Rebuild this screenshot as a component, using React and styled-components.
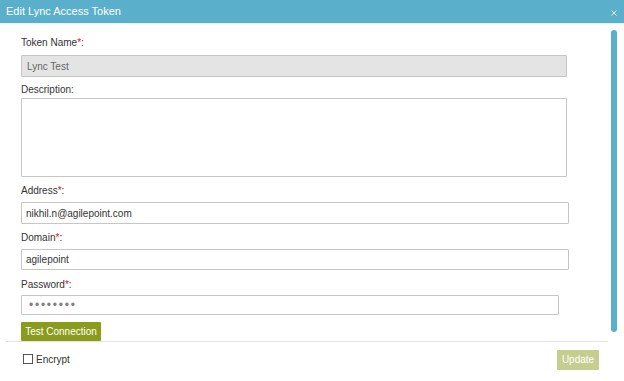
import React from "react";
import styled, { createGlobalStyle } from "styled-components";

const Global = createGlobalStyle`
  html, body { margin: 0; padding: 0; background: #ffffff; }
  body { font-family: "Liberation Sans", Arial, sans-serif; }
  * { box-sizing: border-box; }
`;

const Dialog = styled.div`
  width: 624px;
  height: 381px;
  display: flex;
  flex-direction: column;
  background: #ffffff;
  overflow: hidden;
`;

const Header = styled.div`
  height: 24px;
  flex: none;
  display: flex;
  align-items: center;
  justify-content: space-between;
  background: #5aafca;
  border-bottom: 1px solid #e6f3f7;
  padding: 0 7px 1px 6px;
`;

const Title = styled.span`
  color: #ffffff;
  font-size: 11px;
  line-height: 14px;
`;

const Close = styled.button`
  border: none;
  background: none;
  padding: 0;
  margin-top: 3px;
  width: 6px;
  height: 6px;
  display: flex;
  cursor: pointer;
`;

const Body = styled.div`
  flex: 1;
  display: flex;
  min-height: 0;
  overflow: hidden;
`;

const Form = styled.div`
  flex: 1;
  display: flex;
  flex-direction: column;
  align-items: flex-start;
  padding-left: 21px;
`;

const Label = styled.label`
  display: block;
  font-size: 10px;
  line-height: 12px;
  height: 12px;
  color: #333333;
  margin-top: ${(p) => p.$mt}px;
`;

const Req = styled.span`
  color: #e01010;
`;

const Input = styled.input`
  display: block;
  width: ${(p) => p.$w}px;
  height: ${(p) => p.$h}px;
  margin-top: ${(p) => p.$mt}px;
  padding: 0 0 0 ${(p) => (p.$disabled ? 5 : 4)}px;
  border: 1px solid #c6c6c6;
  border-radius: 1px;
  background: ${(p) => (p.$disabled ? "#e4e4e4" : "#ffffff")};
  color: ${(p) => (p.$disabled ? "#666666" : "#333333")};
  font-family: "Liberation Sans", Arial, sans-serif;
  font-size: 10px;
  outline: none;
`;

const PasswordInput = styled(Input)`
  color: #808080;
  font-size: 12px;
  letter-spacing: 1.75px;
  padding-left: 7px;
`;

const TextArea = styled.textarea`
  display: block;
  width: 546px;
  height: 79px;
  margin-top: 2px;
  border: 1px solid #c6c6c6;
  border-radius: 1px;
  resize: none;
  outline: none;
  font-family: "Liberation Sans", Arial, sans-serif;
  font-size: 10px;
`;

const Button = styled.button`
  border: none;
  border-radius: 1px;
  color: #ffffff;
  font-family: "Liberation Sans", Arial, sans-serif;
  font-size: 10px;
  line-height: 12px;
  padding: 0;
  width: ${(p) => p.$w}px;
  height: ${(p) => p.$h}px;
  background: ${(p) => (p.$muted ? "#c6ce8f" : "#8b9b1c")};
  margin-top: ${(p) => p.$mt || 0}px;
  flex: none;
`;

const Scroll = styled.div`
  width: 6px;
  margin: 6px 7px 9px 0;
  border-radius: 3px;
  background: #5aafca;
  flex: none;
`;

const Footer = styled.div`
  height: 40px;
  flex: none;
  margin: 0 16px 0 6px;
  border-top: 1px solid #e3e3e3;
  display: flex;
  justify-content: space-between;
  align-items: flex-start;
  padding: 0 9px 0 17px;
`;

const Check = styled.label`
  display: flex;
  align-items: center;
  margin-top: 12px;
  font-size: 10px;
  line-height: 12px;
  color: #333333;
`;

const Box = styled.span`
  width: 10px;
  height: 10px;
  border: 1px solid #555555;
  background: #ffffff;
  margin-right: 3px;
  margin-top: -2px;
`;

export default function App() {
  return (
    <>
      <Global />
      <Dialog>
        <Header>
          <Title>Edit Lync Access Token</Title>
          <Close aria-label="Close">
            <svg width="6" height="6" viewBox="0 0 6 6">
              <path d="M0.5 0.5 L5.5 5.5 M5.5 0.5 L0.5 5.5" stroke="#d4eaf2" strokeWidth="1" />
            </svg>
          </Close>
        </Header>
        <Body>
          <Form>
            <Label $mt={13}>
              Token Name<Req>*</Req>:
            </Label>
            <Input $mt={6} $w={546} $h={22} $disabled readOnly value="Lync Test" />
            <Label $mt={7}>Description:</Label>
            <TextArea readOnly value="" />
            <Label $mt={8}>
              Address<Req>*</Req>:
            </Label>
            <Input $mt={5} $w={548} $h={22} readOnly value="nikhil.n@agilepoint.com" />
            <Label $mt={8}>
              Domain<Req>*</Req>:
            </Label>
            <Input $mt={5} $w={548} $h={21} readOnly value="agilepoint" />
            <Label $mt={9}>
              Password<Req>*</Req>:
            </Label>
            <PasswordInput $mt={4} $w={538} $h={20} readOnly value="••••••••" />
            <Button $mt={7} $w={80} $h={19}>Test Connection</Button>
          </Form>
          <Scroll />
        </Body>
        <Footer>
          <Check>
            <Box />
            Encrypt
          </Check>
          <Button $muted $w={42} $h={20} $mt={8}>Update</Button>
        </Footer>
      </Dialog>
    </>
  );
}
